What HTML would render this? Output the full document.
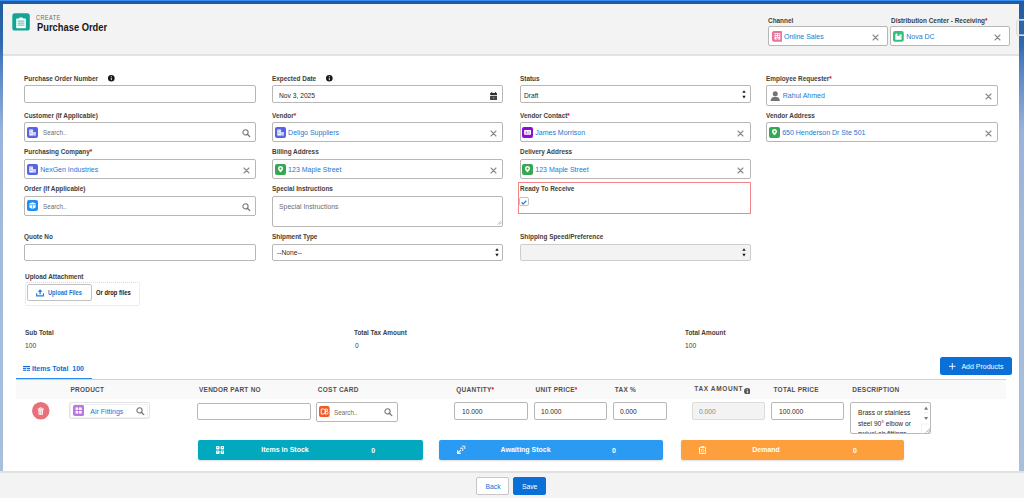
<!DOCTYPE html>
<html><head><meta charset="utf-8">
<style>
*{box-sizing:border-box;margin:0;padding:0}
html,body{width:1024px;height:498px;overflow:hidden}
body{position:relative;font-family:"Liberation Sans",sans-serif;color:#181818;
background:linear-gradient(180deg,#1f5aa0 0px,#2f69ae 45px,#4b7cbf 60px,#6d95cc 90px,#9ab3d9 132px,#a4badc 250px,#a9bfdc 498px)}
.a{position:absolute}
</style></head><body>
<div class="a" style="left:0;top:0;width:1024px;height:1px;background:#3a8ef2"></div>
<div class="a" style="left:3px;top:4px;width:1016px;height:51px;background:#f3f3f3"></div>
<div class="a" style="left:3px;top:54px;width:1016px;height:2px;background:#e2e2e2"></div>
<div class="a" style="left:3px;top:56px;width:1016px;height:416px;background:#fff"></div>
<div class="a" style="left:0;top:471px;width:1024px;height:27px;background:#f3f3f3;border-top:2px solid #e1e1e1"></div>

<div class="a" style="left:1016px;top:18.5px;width:12px;height:17.5px;border-radius:3px;background:#f1f1f1;border:1px solid #dcdcdc"></div>
<div class="a" style="left:1019px;top:20px;width:5px;height:15px;background:#2d66a8;border-top:1px solid #8fb0d8;border-bottom:1px solid #8fb0d8"></div>
<svg class="a" style="left:12px;top:13px" width="18" height="18" viewBox="0 0 18 18">
<rect x="0.3" y="0.3" width="17.5" height="17.3" rx="2.6" fill="#12a595"/>
<rect x="4.2" y="5.6" width="9.7" height="9.6" rx="0.6" fill="#fff"/>
<rect x="7.2" y="4.6" width="3.7" height="1.8" rx="0.6" fill="#fff"/>
<rect x="5.6" y="7.6" width="6.9" height="1" fill="#4dbbb0"/>
<rect x="5.6" y="9.6" width="6.9" height="1" fill="#4dbbb0"/>
<rect x="5.6" y="11.6" width="6.9" height="1" fill="#4dbbb0"/>
</svg>
<div class="a" style="left:36.30px;top:14.00px;font-size:7.6px;font-weight:normal;color:#6b6967;line-height:1;white-space:nowrap;transform:scaleX(0.725);transform-origin:0 0;letter-spacing:0.6px;">CREATE</div>
<div class="a" style="left:36.80px;top:23.00px;font-size:10px;font-weight:bold;color:#181818;line-height:1;white-space:nowrap;transform:scaleX(0.935);transform-origin:0 0;">Purchase Order</div>
<div class="a" style="left:768.30px;top:17.00px;font-size:7px;font-weight:bold;color:#3e3e3c;line-height:1;white-space:nowrap;transform:scaleX(0.915);transform-origin:0 0;">Channel</div>
<div class="a" style="left:768px;top:26.3px;width:120px;height:20.2px;background:#fff;border:1px solid #b9b7b5;border-radius:2px;"></div>
<svg class="a" style="left:771.60px;top:31.00px" width="10.8" height="10.8" viewBox="0 0 11 11" preserveAspectRatio="none"><rect width="11" height="11" rx="2" fill="#e6769c"/><path d="M2.6 2.3h5.8v6.4H2.6z" fill="#fff"/><path d="M3.4 3.1h1.6v1.2H3.4zM6 3.1h1.6v1.2H6zM3.4 5h1.6v1.2H3.4zM6 5h1.6v1.2H6zM4.6 6.9h1.8v1.8H4.6z" fill="#e6769c"/></svg>
<div class="a" style="left:784.00px;top:33.00px;font-size:7px;font-weight:normal;color:#1a78d4;line-height:1;white-space:nowrap;">Online Sales</div>
<svg class="a" style="left:872.30px;top:33.80px" width="7.00" height="7.00" viewBox="-3.50 -3.50 7.00 7.00"><path d="M-2.50 -2.50L2.50 2.50M2.50 -2.50L-2.50 2.50" stroke="#8a8a8a" stroke-width="1.1" stroke-linecap="round"/></svg>
<div class="a" style="left:890.60px;top:17.00px;font-size:7px;font-weight:bold;color:#3e3e3c;line-height:1;white-space:nowrap;transform:scaleX(0.915);transform-origin:0 0;">Distribution Center - Receiving<span style="color:#ea001e">*</span></div>
<div class="a" style="left:890px;top:26.3px;width:120px;height:20.2px;background:#fff;border:1px solid #b9b7b5;border-radius:2px;"></div>
<svg class="a" style="left:893.20px;top:31.00px" width="10.8" height="10.8" viewBox="0 0 11 11" preserveAspectRatio="none"><rect width="11" height="11" rx="2" fill="#33c07f"/><path d="M2.4 8.8V3.5L3.5 2.2 4.6 3.5V8.8z M4.6 8.8V5h2v3.8z M6.6 8.8V3.6h2.1v5.2z" fill="#fff"/><path d="M3.3 4.6h.5v.5h-.5zM3.3 6.2h.5v.5h-.5zM7.3 5h.6v.5h-.6zM7.3 6.6h.6v.5h-.6z" fill="#33c07f" opacity="0.7"/></svg>
<div class="a" style="left:906.20px;top:33.00px;font-size:7px;font-weight:normal;color:#1a78d4;line-height:1;white-space:nowrap;">Nova DC</div>
<svg class="a" style="left:994.30px;top:33.80px" width="7.00" height="7.00" viewBox="-3.50 -3.50 7.00 7.00"><path d="M-2.50 -2.50L2.50 2.50M2.50 -2.50L-2.50 2.50" stroke="#8a8a8a" stroke-width="1.1" stroke-linecap="round"/></svg>
<div class="a" style="left:24.40px;top:75.00px;font-size:7px;font-weight:bold;color:#3e3e3c;line-height:1;white-space:nowrap;transform:scaleX(0.915);transform-origin:0 0;">Purchase Order Number</div>
<svg class="a" style="left:108.30px;top:75.20px" width="6.60" height="6.60" viewBox="0 0 6.60 6.60"><circle cx="3.3" cy="3.3" r="3.3" fill="#181818"/><rect x="2.85" y="2.70" width="0.9" height="2.4" fill="#fff"/><rect x="2.85" y="1.20" width="0.9" height="0.9" fill="#fff"/></svg>
<div class="a" style="left:24.4px;top:85.3px;width:232px;height:17.7px;background:#fff;border:1px solid #b9b7b5;border-radius:2px;"></div>
<div class="a" style="left:272.30px;top:75.00px;font-size:7px;font-weight:bold;color:#3e3e3c;line-height:1;white-space:nowrap;transform:scaleX(0.915);transform-origin:0 0;">Expected Date</div>
<svg class="a" style="left:326.20px;top:75.20px" width="6.60" height="6.60" viewBox="0 0 6.60 6.60"><circle cx="3.3" cy="3.3" r="3.3" fill="#181818"/><rect x="2.85" y="2.70" width="0.9" height="2.4" fill="#fff"/><rect x="2.85" y="1.20" width="0.9" height="0.9" fill="#fff"/></svg>
<div class="a" style="left:272.3px;top:85.3px;width:231px;height:17.7px;background:#fff;border:1px solid #b9b7b5;border-radius:2px;"></div>
<div class="a" style="left:279.00px;top:92.00px;font-size:7.6px;font-weight:normal;color:#2b2826;line-height:1;white-space:nowrap;transform:scaleX(0.88);transform-origin:0 0;">Nov 3, 2025</div>
<svg class="a" style="left:490px;top:91.5px" width="7.2" height="8.4" viewBox="0 0 7.2 8.4"><rect x="1.2" y="0" width="1.1" height="1.6" fill="#3e3e3c"/><rect x="4.9" y="0" width="1.1" height="1.6" fill="#3e3e3c"/><rect x="0" y="1" width="7.2" height="1.9" rx="0.7" fill="#2e2e2e"/><rect x="0" y="3.7" width="7.2" height="4.4" rx="0.7" fill="#444"/><rect x="3" y="5.2" width="1.3" height="1.3" fill="#6a8"/></svg>
<div class="a" style="left:519.50px;top:75.00px;font-size:7px;font-weight:bold;color:#3e3e3c;line-height:1;white-space:nowrap;transform:scaleX(0.915);transform-origin:0 0;">Status</div>
<div class="a" style="left:519.5px;top:85.3px;width:231px;height:17.7px;background:#fff;border:1px solid #b9b7b5;border-radius:2px;"></div>
<div class="a" style="left:524.20px;top:92.00px;font-size:7.6px;font-weight:normal;color:#2b2826;line-height:1;white-space:nowrap;transform:scaleX(0.88);transform-origin:0 0;">Draft</div>
<svg class="a" style="left:742.40px;top:89.90px" width="4" height="9" viewBox="0 0 4 9"><path d="M0.3 2.7L2 0.2 3.7 2.7z M0.3 5.8L2 8.4 3.7 5.8z" fill="#181818"/></svg>
<div class="a" style="left:766.40px;top:75.00px;font-size:7px;font-weight:bold;color:#3e3e3c;line-height:1;white-space:nowrap;transform:scaleX(0.915);transform-origin:0 0;">Employee Requester<span style="color:#ea001e">*</span></div>
<div class="a" style="left:766.4px;top:85.3px;width:231.6px;height:20.5px;background:#fff;border:1px solid #b9b7b5;border-radius:2px;"></div>
<svg class="a" style="left:770px;top:91px" width="10.5" height="10" viewBox="0 0 10.5 10"><circle cx="5.25" cy="2.7" r="2.5" fill="#747474"/><path d="M0.6 10c0-2.8 2-4.3 4.65-4.3S9.9 7.2 9.9 10z" fill="#747474"/></svg>
<div class="a" style="left:782.80px;top:92.00px;font-size:7px;font-weight:normal;color:#1a78d4;line-height:1;white-space:nowrap;">Rahul Ahmed</div>
<svg class="a" style="left:984.90px;top:92.50px" width="7.00" height="7.00" viewBox="-3.50 -3.50 7.00 7.00"><path d="M-2.50 -2.50L2.50 2.50M2.50 -2.50L-2.50 2.50" stroke="#8a8a8a" stroke-width="1.1" stroke-linecap="round"/></svg>
<div class="a" style="left:24.40px;top:112.00px;font-size:7px;font-weight:bold;color:#3e3e3c;line-height:1;white-space:nowrap;transform:scaleX(0.915);transform-origin:0 0;">Customer (If Applicable)</div>
<div class="a" style="left:24.4px;top:122.4px;width:232px;height:19.5px;background:#fff;border:1px solid #b9b7b5;border-radius:2px;"></div><svg class="a" style="left:27.00px;top:126.50px" width="11" height="11" viewBox="0 0 11 11" preserveAspectRatio="none"><rect width="11" height="11" rx="2" fill="#5664e6"/><path d="M2.3 2.6h3.6v6H2.3z M6.2 5.2h2.6v3.4H6.2z" fill="#fff"/><path d="M3 3.4h.8v.7H3zM4.4 3.4h.8v.7h-.8zM3 4.8h.8v.7H3zM4.4 4.8h.8v.7h-.8zM3 6.2h.8v.7H3zM4.4 6.2h.8v.7h-.8zM6.8 5.9h.6v.6h-.6zM7.7 5.9h.6v.6h-.6zM6.8 7.1h.6v.6h-.6zM7.7 7.1h.6v.6h-.6z" fill="#5664e6" opacity="0.75"/></svg><div class="a" style="left:42.50px;top:129.00px;font-size:7px;font-weight:normal;color:#6e6c6a;line-height:1;white-space:nowrap;transform:scaleX(0.9);transform-origin:0 0;">Search..</div><svg class="a" style="left:242.30px;top:129.30px" width="9" height="9" viewBox="0 0 9 9"><circle cx="3.5" cy="3.4" r="2.6" fill="none" stroke="#747474" stroke-width="1.05"/><path d="M5.4 5.3L7.8 7.6" stroke="#747474" stroke-width="1.3" stroke-linecap="round"/></svg>
<div class="a" style="left:272.30px;top:112.00px;font-size:7px;font-weight:bold;color:#3e3e3c;line-height:1;white-space:nowrap;transform:scaleX(0.915);transform-origin:0 0;">Vendor<span style="color:#ea001e">*</span></div>
<div class="a" style="left:272.3px;top:122.4px;width:231px;height:19.5px;background:#fff;border:1px solid #b9b7b5;border-radius:2px;"></div><svg class="a" style="left:275.20px;top:126.80px" width="11" height="11" viewBox="0 0 11 11" preserveAspectRatio="none"><rect width="11" height="11" rx="2" fill="#5664e6"/><path d="M2.3 2.6h3.6v6H2.3z M6.2 5.2h2.6v3.4H6.2z" fill="#fff"/><path d="M3 3.4h.8v.7H3zM4.4 3.4h.8v.7h-.8zM3 4.8h.8v.7H3zM4.4 4.8h.8v.7h-.8zM3 6.2h.8v.7H3zM4.4 6.2h.8v.7h-.8zM6.8 5.9h.6v.6h-.6zM7.7 5.9h.6v.6h-.6zM6.8 7.1h.6v.6h-.6zM7.7 7.1h.6v.6h-.6z" fill="#5664e6" opacity="0.75"/></svg><div class="a" style="left:288.10px;top:129.00px;font-size:7px;font-weight:normal;color:#1a78d4;line-height:1;white-space:nowrap;">Deligo Suppliers</div><svg class="a" style="left:490.20px;top:129.80px" width="7.00" height="7.00" viewBox="-3.50 -3.50 7.00 7.00"><path d="M-2.50 -2.50L2.50 2.50M2.50 -2.50L-2.50 2.50" stroke="#8a8a8a" stroke-width="1.1" stroke-linecap="round"/></svg>
<div class="a" style="left:519.50px;top:112.00px;font-size:7px;font-weight:bold;color:#3e3e3c;line-height:1;white-space:nowrap;transform:scaleX(0.915);transform-origin:0 0;">Vendor Contact<span style="color:#ea001e">*</span></div>
<div class="a" style="left:519.5px;top:122.4px;width:231px;height:19.5px;background:#fff;border:1px solid #b9b7b5;border-radius:2px;"></div><svg class="a" style="left:522.40px;top:126.80px" width="11" height="11" viewBox="0 0 11 11" preserveAspectRatio="none"><rect width="11" height="11" rx="2" fill="#8c10d0"/><rect x="2.1" y="3.1" width="6.9" height="4.6" rx="0.6" fill="#fff"/><path d="M3.6 6.8v-1.6c0-.7.4-1 .9-1s.9.3.9 1v1.6z M6.2 4.5h1.6v.7H6.2zM6.2 5.8h1.6v.7H6.2z" fill="#8c10d0" opacity="0.55"/></svg><div class="a" style="left:535.30px;top:129.00px;font-size:7px;font-weight:normal;color:#1a78d4;line-height:1;white-space:nowrap;">James Morrison</div><svg class="a" style="left:737.40px;top:129.80px" width="7.00" height="7.00" viewBox="-3.50 -3.50 7.00 7.00"><path d="M-2.50 -2.50L2.50 2.50M2.50 -2.50L-2.50 2.50" stroke="#8a8a8a" stroke-width="1.1" stroke-linecap="round"/></svg>
<div class="a" style="left:766.40px;top:112.00px;font-size:7px;font-weight:bold;color:#3e3e3c;line-height:1;white-space:nowrap;transform:scaleX(0.915);transform-origin:0 0;">Vendor Address</div>
<div class="a" style="left:766.4px;top:122.4px;width:231.6px;height:19.5px;background:#fff;border:1px solid #b9b7b5;border-radius:2px;"></div><svg class="a" style="left:769.30px;top:126.80px" width="11" height="11" viewBox="0 0 11 11" preserveAspectRatio="none"><rect width="11" height="11" rx="2" fill="#36a852"/><path d="M5.5 2.1a2.5 2.5 0 0 0-2.5 2.5c0 1.7 2.5 3.9 2.5 3.9s2.5-2.2 2.5-3.9a2.5 2.5 0 0 0-2.5-2.5z" fill="#fff"/><circle cx="5.5" cy="4.6" r="1.05" fill="#36a852"/></svg><div class="a" style="left:782.20px;top:129.00px;font-size:7px;font-weight:normal;color:#1a78d4;line-height:1;white-space:nowrap;">650 Henderson Dr Ste 501</div><svg class="a" style="left:984.90px;top:129.80px" width="7.00" height="7.00" viewBox="-3.50 -3.50 7.00 7.00"><path d="M-2.50 -2.50L2.50 2.50M2.50 -2.50L-2.50 2.50" stroke="#8a8a8a" stroke-width="1.1" stroke-linecap="round"/></svg>
<div class="a" style="left:24.40px;top:148.00px;font-size:7px;font-weight:bold;color:#3e3e3c;line-height:1;white-space:nowrap;transform:scaleX(0.915);transform-origin:0 0;">Purchasing Company<span style="color:#ea001e">*</span></div>
<div class="a" style="left:24.4px;top:159.3px;width:232px;height:19.5px;background:#fff;border:1px solid #b9b7b5;border-radius:2px;"></div><svg class="a" style="left:27.30px;top:163.70px" width="11" height="11" viewBox="0 0 11 11" preserveAspectRatio="none"><rect width="11" height="11" rx="2" fill="#5664e6"/><path d="M2.3 2.6h3.6v6H2.3z M6.2 5.2h2.6v3.4H6.2z" fill="#fff"/><path d="M3 3.4h.8v.7H3zM4.4 3.4h.8v.7h-.8zM3 4.8h.8v.7H3zM4.4 4.8h.8v.7h-.8zM3 6.2h.8v.7H3zM4.4 6.2h.8v.7h-.8zM6.8 5.9h.6v.6h-.6zM7.7 5.9h.6v.6h-.6zM6.8 7.1h.6v.6h-.6zM7.7 7.1h.6v.6h-.6z" fill="#5664e6" opacity="0.75"/></svg><div class="a" style="left:40.20px;top:166.00px;font-size:7px;font-weight:normal;color:#1a78d4;line-height:1;white-space:nowrap;">NexGen Industries</div><svg class="a" style="left:243.30px;top:166.70px" width="7.00" height="7.00" viewBox="-3.50 -3.50 7.00 7.00"><path d="M-2.50 -2.50L2.50 2.50M2.50 -2.50L-2.50 2.50" stroke="#8a8a8a" stroke-width="1.1" stroke-linecap="round"/></svg>
<div class="a" style="left:272.30px;top:148.00px;font-size:7px;font-weight:bold;color:#3e3e3c;line-height:1;white-space:nowrap;transform:scaleX(0.915);transform-origin:0 0;">Billing Address</div>
<div class="a" style="left:272.3px;top:159.3px;width:231px;height:19.5px;background:#fff;border:1px solid #b9b7b5;border-radius:2px;"></div><svg class="a" style="left:275.20px;top:163.70px" width="11" height="11" viewBox="0 0 11 11" preserveAspectRatio="none"><rect width="11" height="11" rx="2" fill="#36a852"/><path d="M5.5 2.1a2.5 2.5 0 0 0-2.5 2.5c0 1.7 2.5 3.9 2.5 3.9s2.5-2.2 2.5-3.9a2.5 2.5 0 0 0-2.5-2.5z" fill="#fff"/><circle cx="5.5" cy="4.6" r="1.05" fill="#36a852"/></svg><div class="a" style="left:288.10px;top:166.00px;font-size:7px;font-weight:normal;color:#1a78d4;line-height:1;white-space:nowrap;">123 Maple Street</div><svg class="a" style="left:490.20px;top:166.70px" width="7.00" height="7.00" viewBox="-3.50 -3.50 7.00 7.00"><path d="M-2.50 -2.50L2.50 2.50M2.50 -2.50L-2.50 2.50" stroke="#8a8a8a" stroke-width="1.1" stroke-linecap="round"/></svg>
<div class="a" style="left:519.50px;top:148.00px;font-size:7px;font-weight:bold;color:#3e3e3c;line-height:1;white-space:nowrap;transform:scaleX(0.915);transform-origin:0 0;">Delivery Address</div>
<div class="a" style="left:519.5px;top:159.3px;width:231px;height:19.5px;background:#fff;border:1px solid #b9b7b5;border-radius:2px;"></div><svg class="a" style="left:522.40px;top:163.70px" width="11" height="11" viewBox="0 0 11 11" preserveAspectRatio="none"><rect width="11" height="11" rx="2" fill="#36a852"/><path d="M5.5 2.1a2.5 2.5 0 0 0-2.5 2.5c0 1.7 2.5 3.9 2.5 3.9s2.5-2.2 2.5-3.9a2.5 2.5 0 0 0-2.5-2.5z" fill="#fff"/><circle cx="5.5" cy="4.6" r="1.05" fill="#36a852"/></svg><div class="a" style="left:535.30px;top:166.00px;font-size:7px;font-weight:normal;color:#1a78d4;line-height:1;white-space:nowrap;">123 Maple Street</div><svg class="a" style="left:737.40px;top:166.70px" width="7.00" height="7.00" viewBox="-3.50 -3.50 7.00 7.00"><path d="M-2.50 -2.50L2.50 2.50M2.50 -2.50L-2.50 2.50" stroke="#8a8a8a" stroke-width="1.1" stroke-linecap="round"/></svg>
<div class="a" style="left:24.40px;top:185.00px;font-size:7px;font-weight:bold;color:#3e3e3c;line-height:1;white-space:nowrap;transform:scaleX(0.915);transform-origin:0 0;">Order (If Applicable)</div>
<div class="a" style="left:24.4px;top:196.3px;width:232px;height:19.4px;background:#fff;border:1px solid #b9b7b5;border-radius:2px;"></div><svg class="a" style="left:27.00px;top:200.40px" width="11" height="11" viewBox="0 0 11 11" preserveAspectRatio="none"><rect width="11" height="11" rx="2" fill="#1e90f3"/><path d="M5.5 2.2L8.6 3.6v3.9L5.5 8.9 2.4 7.5V3.6z" fill="#fff"/><path d="M2.4 4.6h6.2v.6H2.4zM5.2 5.2h.6v3.5h-.6z" fill="#1e90f3"/></svg><div class="a" style="left:42.50px;top:203.00px;font-size:7px;font-weight:normal;color:#6e6c6a;line-height:1;white-space:nowrap;transform:scaleX(0.9);transform-origin:0 0;">Search..</div><svg class="a" style="left:242.30px;top:203.20px" width="9" height="9" viewBox="0 0 9 9"><circle cx="3.5" cy="3.4" r="2.6" fill="none" stroke="#747474" stroke-width="1.05"/><path d="M5.4 5.3L7.8 7.6" stroke="#747474" stroke-width="1.3" stroke-linecap="round"/></svg>
<div class="a" style="left:272.30px;top:185.00px;font-size:7px;font-weight:bold;color:#3e3e3c;line-height:1;white-space:nowrap;transform:scaleX(0.915);transform-origin:0 0;">Special Instructions</div>
<div class="a" style="left:272.3px;top:196.1px;width:231px;height:31px;background:#fff;border:1px solid #b9b7b5;border-radius:2px;"></div>
<div class="a" style="left:278.80px;top:203.00px;font-size:7px;font-weight:normal;color:#6e6c6a;line-height:1;white-space:nowrap;transform:scaleX(0.98);transform-origin:0 0;">Special Instructions</div>
<svg class="a" style="left:497px;top:220px" width="5" height="5" viewBox="0 0 5 5"><path d="M4.5 0.8L0.8 4.5M4.5 2.8L2.8 4.5" stroke="#777" stroke-width="0.6"/></svg>
<div class="a" style="left:518px;top:182px;width:233px;height:32px;border:1px solid #f2858a"></div>
<div class="a" style="left:519.50px;top:185.00px;font-size:7px;font-weight:bold;color:#3e3e3c;line-height:1;white-space:nowrap;transform:scaleX(0.915);transform-origin:0 0;">Ready To Receive</div>
<div class="a" style="left:519.2px;top:197.2px;width:9.5px;height:9.3px;background:#fff;border:1px solid #c4c2c0;border-radius:2px;"></div>
<svg class="a" style="left:521.2px;top:199.6px" width="6" height="5" viewBox="0 0 6 5"><path d="M0.6 2.5L2.1 3.9 5.3 0.8" fill="none" stroke="#1b78d6" stroke-width="1.2"/></svg>
<div class="a" style="left:24.40px;top:233.00px;font-size:7px;font-weight:bold;color:#3e3e3c;line-height:1;white-space:nowrap;transform:scaleX(0.915);transform-origin:0 0;">Quote No</div>
<div class="a" style="left:24.4px;top:243.9px;width:232px;height:17px;background:#fff;border:1px solid #b9b7b5;border-radius:2px;"></div>
<div class="a" style="left:272.30px;top:233.00px;font-size:7px;font-weight:bold;color:#3e3e3c;line-height:1;white-space:nowrap;transform:scaleX(0.915);transform-origin:0 0;">Shipment Type</div>
<div class="a" style="left:272.3px;top:243.9px;width:231px;height:17px;background:#fff;border:1px solid #b9b7b5;border-radius:2px;"></div>
<div class="a" style="left:277.00px;top:249.00px;font-size:7.6px;font-weight:normal;color:#2b2826;line-height:1;white-space:nowrap;transform:scaleX(0.88);transform-origin:0 0;">--None--</div>
<svg class="a" style="left:495.30px;top:248.00px" width="4" height="9" viewBox="0 0 4 9"><path d="M0.3 2.7L2 0.2 3.7 2.7z M0.3 5.8L2 8.4 3.7 5.8z" fill="#181818"/></svg>
<div class="a" style="left:519.50px;top:233.00px;font-size:7px;font-weight:bold;color:#3e3e3c;line-height:1;white-space:nowrap;transform:scaleX(0.915);transform-origin:0 0;">Shipping Speed/Preference</div>
<div class="a" style="left:519.5px;top:243.9px;width:231px;height:17px;background:#f3f3f3;border:1px solid #cfcdcb;border-radius:2px;"></div>
<svg class="a" style="left:742.40px;top:248.00px" width="4" height="9" viewBox="0 0 4 9"><path d="M0.3 2.7L2 0.2 3.7 2.7z M0.3 5.8L2 8.4 3.7 5.8z" fill="#181818"/></svg>
<div class="a" style="left:24.70px;top:273.00px;font-size:7px;font-weight:bold;color:#3e3e3c;line-height:1;white-space:nowrap;transform:scaleX(0.915);transform-origin:0 0;">Upload Attachment</div>
<div class="a" style="left:25px;top:281.6px;width:114.5px;height:24px;border:1px dotted #d9d9d9;border-radius:2px"></div>
<div class="a" style="left:26.7px;top:283.5px;width:64.9px;height:17.2px;background:#fff;border:1px solid #c4c2c0;border-radius:2px;"></div>
<svg class="a" style="left:35.6px;top:289px" width="8.2" height="7.6" viewBox="0 0 8.2 7.6"><path d="M4.1 0.2L1.6 2.7h1.8v2.6h1.4V2.7h1.8z" fill="#1b7fe0"/><path d="M0.7 4.2v2.6h6.8V4.2" fill="none" stroke="#1b7fe0" stroke-width="1.2"/></svg>
<div class="a" style="left:48.10px;top:290.00px;font-size:6.8px;font-weight:bold;color:#1a78d4;line-height:1;white-space:nowrap;transform:scaleX(0.84);transform-origin:0 0;">Upload Files</div>
<div class="a" style="left:95.60px;top:290.00px;font-size:6.8px;font-weight:bold;color:#181818;line-height:1;white-space:nowrap;transform:scaleX(0.86);transform-origin:0 0;">Or drop files</div>
<div class="a" style="left:24.70px;top:329.00px;font-size:7px;font-weight:bold;color:#3e3e3c;line-height:1;white-space:nowrap;transform:scaleX(0.915);transform-origin:0 0;">Sub Total</div>
<div class="a" style="left:24.70px;top:342.00px;font-size:7.6px;font-weight:normal;color:#3e3e3c;line-height:1;white-space:nowrap;transform:scaleX(0.88);transform-origin:0 0;">100</div>
<div class="a" style="left:354.20px;top:329.00px;font-size:7px;font-weight:bold;color:#3e3e3c;line-height:1;white-space:nowrap;transform:scaleX(0.915);transform-origin:0 0;">Total Tax Amount</div>
<div class="a" style="left:354.50px;top:342.00px;font-size:7.6px;font-weight:normal;color:#3e3e3c;line-height:1;white-space:nowrap;transform:scaleX(0.88);transform-origin:0 0;">0</div>
<div class="a" style="left:684.50px;top:329.00px;font-size:7px;font-weight:bold;color:#3e3e3c;line-height:1;white-space:nowrap;transform:scaleX(0.915);transform-origin:0 0;">Total Amount</div>
<div class="a" style="left:684.50px;top:342.00px;font-size:7.6px;font-weight:normal;color:#3e3e3c;line-height:1;white-space:nowrap;transform:scaleX(0.88);transform-origin:0 0;">100</div>
<svg class="a" style="left:22.9px;top:365.6px" width="7" height="5.4" viewBox="0 0 7 5.4"><rect x="0" y="0" width="7" height="1.2" fill="#0b6fd8"/><rect x="0" y="2.1" width="3.2" height="1.2" fill="#0b6fd8"/><rect x="3.8" y="2.1" width="3.2" height="1.2" fill="#0b6fd8"/><rect x="0" y="4.2" width="3.2" height="1.2" fill="#0b6fd8"/><rect x="3.8" y="4.2" width="3.2" height="1.2" fill="#0b6fd8"/></svg>
<div class="a" style="left:32.00px;top:365.00px;font-size:7px;font-weight:bold;color:#0b6fd8;line-height:1;white-space:nowrap;">Items Total&nbsp;&nbsp;100</div>
<div class="a" style="left:16px;top:378.5px;width:990px;height:1.4px;background:#d4d2d0"></div>
<div class="a" style="left:16px;top:377.7px;width:75.6px;height:1.6px;background:#2a8cf0"></div>
<div class="a" style="left:940px;top:357.2px;width:72.4px;height:17.6px;background:#0b6fd8;border-radius:2.5px"></div>
<svg class="a" style="left:949.3px;top:363.4px" width="6.6" height="6.6" viewBox="0 0 6.6 6.6"><path d="M3.3 0v6.6M0 3.3h6.6" stroke="#fff" stroke-width="0.9"/></svg>
<div class="a" style="left:961.40px;top:363.00px;font-size:7px;font-weight:normal;color:#fff;line-height:1;white-space:nowrap;">Add Products</div>
<div class="a" style="left:16px;top:380px;width:990px;height:19px;background:#f9f9f9"></div>
<div class="a" style="left:70.40px;top:387.00px;font-size:6.5px;font-weight:bold;color:#51504e;line-height:1;white-space:nowrap;letter-spacing:0.25px;">PRODUCT</div>
<div class="a" style="left:199.00px;top:387.00px;font-size:6.5px;font-weight:bold;color:#51504e;line-height:1;white-space:nowrap;letter-spacing:0.25px;">VENDOR PART NO</div>
<div class="a" style="left:317.80px;top:387.00px;font-size:6.5px;font-weight:bold;color:#51504e;line-height:1;white-space:nowrap;letter-spacing:0.25px;">COST CARD</div>
<div class="a" style="left:456.30px;top:387.00px;font-size:6.5px;font-weight:bold;color:#51504e;line-height:1;white-space:nowrap;letter-spacing:0.25px;">QUANTITY<span style="color:#ea001e">*</span></div>
<div class="a" style="left:535.50px;top:387.00px;font-size:6.5px;font-weight:bold;color:#51504e;line-height:1;white-space:nowrap;letter-spacing:0.25px;">UNIT PRICE<span style="color:#ea001e">*</span></div>
<div class="a" style="left:614.80px;top:387.00px;font-size:6.5px;font-weight:bold;color:#51504e;line-height:1;white-space:nowrap;letter-spacing:0.25px;">TAX %</div>
<div class="a" style="left:694.30px;top:386.00px;font-size:6.5px;font-weight:bold;color:#51504e;line-height:1;white-space:nowrap;letter-spacing:0.62px;">TAX AMOUNT</div>
<div class="a" style="left:773.50px;top:387.00px;font-size:6.5px;font-weight:bold;color:#51504e;line-height:1;white-space:nowrap;letter-spacing:0.25px;">TOTAL PRICE</div>
<div class="a" style="left:852.30px;top:387.00px;font-size:6.5px;font-weight:bold;color:#51504e;line-height:1;white-space:nowrap;letter-spacing:0.25px;">DESCRIPTION</div>
<svg class="a" style="left:743.90px;top:387.50px" width="6.60" height="6.60" viewBox="0 0 6.60 6.60"><circle cx="3.3" cy="3.3" r="3.3" fill="#5a5a5a"/><rect x="2.85" y="2.70" width="0.9" height="2.4" fill="#fff"/><rect x="2.85" y="1.20" width="0.9" height="0.9" fill="#fff"/></svg>
<svg class="a" style="left:32.1px;top:402.1px" width="17.5" height="17.5" viewBox="0 0 17.5 17.5"><circle cx="8.75" cy="8.75" r="8.75" fill="#e7707b"/><path d="M5.6 7.1h6.3" stroke="#fff" stroke-width="0.9"/><path d="M7.6 7V5.9h2.3V7" fill="none" stroke="#fff" stroke-width="0.8"/><path d="M6.3 7.6h4.9l-.4 5.2H6.7z" fill="#fff"/><path d="M7.9 8.4v3.6M9.6 8.4v3.6" stroke="#e7707b" stroke-width="0.6"/></svg>
<div class="a" style="left:68.5px;top:402.4px;width:81.1px;height:17.1px;background:#fff;border:1px solid #e3e3e3;border-radius:2px;"></div>
<div class="a" style="left:70.3px;top:404px;width:77.5px;height:14px;border:1px solid #f0f0f0;border-radius:1px"></div>
<svg class="a" style="left:73.00px;top:405.00px" width="11.3" height="11" viewBox="0 0 11 11" preserveAspectRatio="none"><rect width="11" height="11" rx="2" fill="#bb77dd"/><path d="M2.5 2.5h2.6v2.6H2.5zM5.9 2.5h2.6v2.6H5.9zM2.5 5.9h2.6v2.6H2.5zM5.9 5.9h2.6v2.6H5.9z" fill="#fff"/></svg>
<div class="a" style="left:90.30px;top:408.00px;font-size:7px;font-weight:normal;color:#1a78d4;line-height:1;white-space:nowrap;">Air Fittings</div>
<svg class="a" style="left:135.60px;top:407.10px" width="9" height="9" viewBox="0 0 9 9"><circle cx="3.5" cy="3.4" r="2.6" fill="none" stroke="#747474" stroke-width="1.05"/><path d="M5.4 5.3L7.8 7.6" stroke="#747474" stroke-width="1.3" stroke-linecap="round"/></svg>
<div class="a" style="left:197.1px;top:402.5px;width:113.5px;height:17.1px;background:#fff;border:1px solid #b9b7b5;border-radius:2px;"></div>
<div class="a" style="left:316.4px;top:402.2px;width:81.6px;height:19.6px;background:#fff;border:1px solid #b9b7b5;border-radius:2px;"></div>
<svg class="a" style="left:319.00px;top:406.30px" width="10.6" height="11" viewBox="0 0 11 11" preserveAspectRatio="none"><rect width="11" height="11" rx="2" fill="#f25b28"/><path d="M2.3 3h2.2a1.6 1.6 0 0 1 0 5H2.3z M6.3 3h1.6a1.1 1.1 0 0 1 0 2.2h-1.6z M6.3 5.4h1.8a1.3 1.3 0 0 1 0 2.6H6.3z" fill="none" stroke="#fff" stroke-width="0.9"/></svg>
<div class="a" style="left:333.90px;top:409.00px;font-size:7px;font-weight:normal;color:#6e6c6a;line-height:1;white-space:nowrap;transform:scaleX(0.9);transform-origin:0 0;">Search..</div>
<svg class="a" style="left:383.60px;top:407.60px" width="9" height="9" viewBox="0 0 9 9"><circle cx="3.5" cy="3.4" r="2.6" fill="none" stroke="#747474" stroke-width="1.05"/><path d="M5.4 5.3L7.8 7.6" stroke="#747474" stroke-width="1.3" stroke-linecap="round"/></svg>
<div class="a" style="left:454.4px;top:402.3px;width:73.8px;height:17.3px;background:#fff;border:1px solid #b9b7b5;border-radius:2px;"></div>
<div class="a" style="left:462.00px;top:408.00px;font-size:7.6px;font-weight:normal;color:#2b2826;line-height:1;white-space:nowrap;transform:scaleX(0.88);transform-origin:0 0;">10.000</div>
<div class="a" style="left:533.8px;top:402.3px;width:73.3px;height:17.3px;background:#fff;border:1px solid #b9b7b5;border-radius:2px;"></div>
<div class="a" style="left:541.40px;top:408.00px;font-size:7.6px;font-weight:normal;color:#2b2826;line-height:1;white-space:nowrap;transform:scaleX(0.88);transform-origin:0 0;">10.000</div>
<div class="a" style="left:612.6px;top:402.3px;width:54.1px;height:17.3px;background:#fff;border:1px solid #b9b7b5;border-radius:2px;"></div>
<div class="a" style="left:620.20px;top:408.00px;font-size:7.6px;font-weight:normal;color:#2b2826;line-height:1;white-space:nowrap;transform:scaleX(0.88);transform-origin:0 0;">0.000</div>
<div class="a" style="left:771.3px;top:402.3px;width:73.1px;height:17.3px;background:#fff;border:1px solid #b9b7b5;border-radius:2px;"></div>
<div class="a" style="left:778.90px;top:408.00px;font-size:7.6px;font-weight:normal;color:#2b2826;line-height:1;white-space:nowrap;transform:scaleX(0.88);transform-origin:0 0;">100.000</div>
<div class="a" style="left:692.4px;top:402.3px;width:72.7px;height:17.3px;background:#f3f3f3;border:1px solid #dedcda;border-radius:2px;"></div>
<div class="a" style="left:699.00px;top:408.00px;font-size:7.6px;font-weight:normal;color:#8a8886;line-height:1;white-space:nowrap;transform:scaleX(0.88);transform-origin:0 0;">0.000</div>
<div class="a" style="left:850px;top:402.2px;width:81.3px;height:32px;background:#fff;border:1px solid #b9b7b5;border-radius:2px;"></div>
<div class="a" style="left:851.5px;top:403.2px;width:78.8px;height:30px;overflow:hidden"><div class="a" style="left:6.2px;top:5px;white-space:nowrap;font-size:7.6px;line-height:10.6px;color:#2b2826;transform:scaleX(0.875);transform-origin:0 0">Brass or stainless<br>steel 90&deg; elbow or<br>swivel air fittings</div></div>
<svg class="a" style="left:921px;top:403.2px" width="10" height="31" viewBox="0 0 10 31"><path d="M3.1 6.7L5.1 3.6 7.1 6.7z" fill="#7a7a7a"/><path d="M3.1 13.9L5.1 17 7.1 13.9z" fill="#7a7a7a"/><path d="M2.6 9.8h5" stroke="#d8d8d8" stroke-width="0.6"/><path d="M0.4 31V21h9.6" fill="none" stroke="#e8e8e8" stroke-width="0.6"/><path d="M9 25.5L5 29.5M9 27.8L7.2 29.6" stroke="#666" stroke-width="0.6"/></svg>
<div class="a" style="left:198px;top:439.7px;width:224.8px;height:20.4px;border-radius:2px;background:#02a8be;box-shadow:0 1px 2px rgba(0,0,0,.13)"></div>
<svg class="a" style="left:216.2px;top:446px" width="8.2" height="8" viewBox="0 0 8.2 8"><rect x="0" y="0" width="3.6" height="3.5" rx="0.9" fill="#fff"/><rect x="4.6" y="0" width="3.6" height="3.5" rx="0.9" fill="#fff"/><rect x="0" y="4.5" width="3.6" height="3.5" rx="0.9" fill="#fff"/><rect x="4.6" y="4.5" width="3.6" height="3.5" rx="0.9" fill="#fff"/><circle cx="1.8" cy="1.3" r="0.6" fill="#02a8be"/><circle cx="6.4" cy="1.3" r="0.6" fill="#02a8be"/><circle cx="1.8" cy="5.8" r="0.6" fill="#02a8be"/><circle cx="6.4" cy="5.8" r="0.6" fill="#02a8be"/></svg>
<div class="a" style="left:261.30px;top:446.00px;font-size:7px;font-weight:bold;color:#fff;line-height:1;white-space:nowrap;">Items in Stock</div>
<div class="a" style="left:371.30px;top:447.00px;font-size:7px;font-weight:bold;color:#fff;line-height:1;white-space:nowrap;">0</div>
<div class="a" style="left:439.4px;top:439.7px;width:223.6px;height:20.4px;border-radius:2px;background:#2a9af3;box-shadow:0 1px 2px rgba(0,0,0,.13)"></div>
<svg class="a" style="left:457px;top:445.4px" width="9" height="9" viewBox="0 0 9 9"><path d="M0.6 8.4L4 5M0.6 5.2v3.2h3.2" fill="none" stroke="#fff" stroke-width="1.1"/><path d="M3 3.2h2.8V6" fill="none" stroke="#fff" stroke-width="0.9"/><path d="M5 1.2h2.8V4" fill="none" stroke="#fff" stroke-width="0.9"/></svg>
<div class="a" style="left:500.60px;top:446.00px;font-size:7px;font-weight:bold;color:#fff;line-height:1;white-space:nowrap;">Awaiting Stock</div>
<div class="a" style="left:612.00px;top:447.00px;font-size:7px;font-weight:bold;color:#fff;line-height:1;white-space:nowrap;">0</div>
<div class="a" style="left:680.6px;top:439.7px;width:223.4px;height:20.4px;border-radius:2px;background:#fd9f3d;box-shadow:0 1px 2px rgba(0,0,0,.13)"></div>
<svg class="a" style="left:698.9px;top:446px" width="7.2" height="8" viewBox="0 0 7.2 8"><rect x="0.5" y="1.2" width="6.2" height="6.4" rx="0.6" fill="none" stroke="#fff" stroke-width="1"/><rect x="2.2" y="0.2" width="2.8" height="1.6" fill="#fff"/><circle cx="3.6" cy="4.6" r="1.4" fill="none" stroke="#fff" stroke-width="0.8"/></svg>
<div class="a" style="left:752.25px;top:446.00px;font-size:7px;font-weight:bold;color:#fff;line-height:1;white-space:nowrap;">Demand</div>
<div class="a" style="left:853.00px;top:447.00px;font-size:7px;font-weight:bold;color:#fff;line-height:1;white-space:nowrap;">0</div>
<div class="a" style="left:476.2px;top:477px;width:32.8px;height:17.5px;background:#fff;border:1px solid #c9c7c5;border-radius:2px;"></div>
<div class="a" style="left:485.50px;top:484.00px;font-size:6.8px;font-weight:normal;color:#1472cc;line-height:1;white-space:nowrap;">Back</div>
<div class="a" style="left:513.2px;top:477px;width:32.8px;height:17.5px;background:#0b6fd8;border:1px solid #0b6fd8;border-radius:2px;"></div>
<div class="a" style="left:521.90px;top:484.00px;font-size:6.8px;font-weight:normal;color:#fff;line-height:1;white-space:nowrap;">Save</div>
</body></html>
